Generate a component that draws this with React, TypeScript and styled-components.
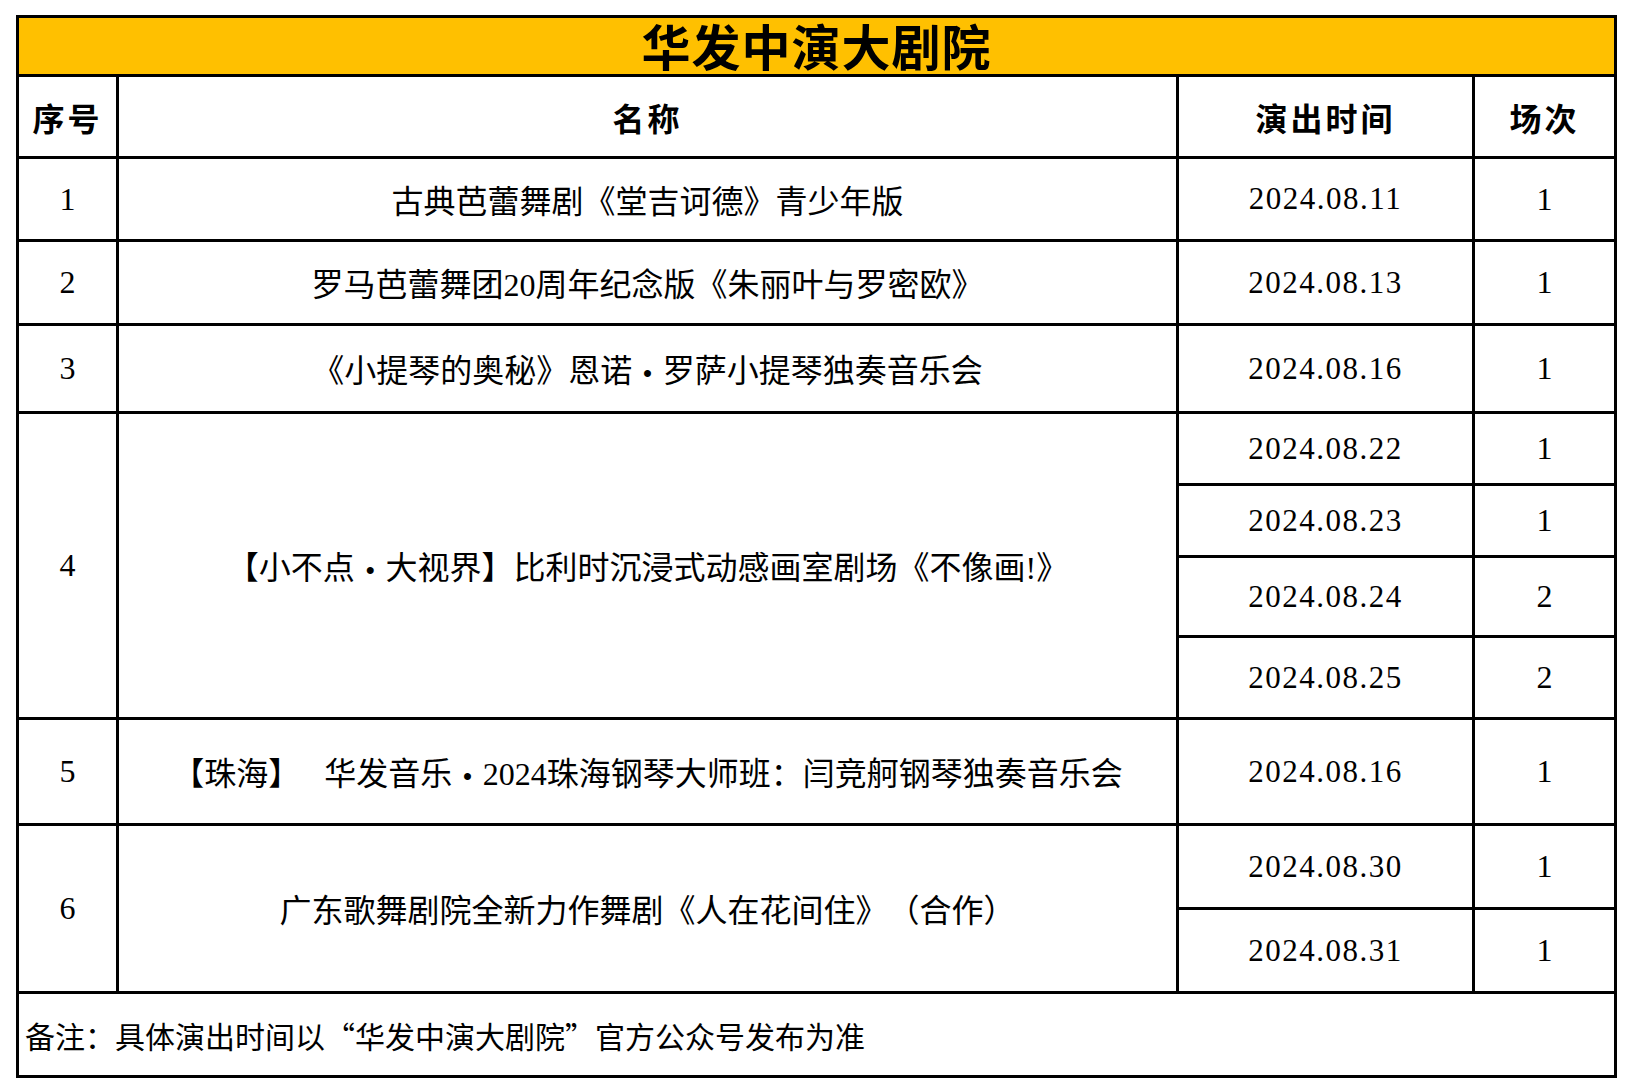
import React from 'react'
import styled, {createGlobalStyle} from "styled-components";

const GlobalStyle = createGlobalStyle`
  html, body {
    margin: 0;
    padding: 0;
    background: #ffffff;
  }
  body {
    font-family: "Liberation Serif", "Noto Sans CJK SC", serif;
    color: #000;
  }
`

const Page = styled.div`
  padding: 15px 16px;
  background: #fff;
`

const Table = styled.table`
  width: 1598px;
  table-layout: fixed;
  border-collapse: collapse;
  border: 3px solid #000;
`

const Cell = styled.td<{ $h?: number }>`
  border: 3px solid #000;
  height: ${p => p.$h ? `${p.$h - 3}px` : 'auto'};
  padding: 0;
  text-align: center;
  vertical-align: middle;
  font-size: 32px;
  line-height: 1.2;
  white-space: nowrap;
`

const TitleCell = styled(Cell)`
  background: #ffc000;
  font-size: 49px;
  font-weight: 700;
  letter-spacing: 1px;
  line-height: 1;
  padding-top: 6px;
`

const HeadCell = styled(Cell)`
  font-weight: 700;
  letter-spacing: 3px;
  padding-top: 7px;
`

const NameCell = styled(Cell)`
  padding-top: 6px;
`

const DateCell = styled(Cell)`
  font-size: 31px;
  letter-spacing: 1.5px;
`

const NoteCell = styled(Cell)`
  text-align: left;
  font-family: "Noto Sans CJK SC", sans-serif;
  font-size: 30px;
  padding-left: 6px;
`

const Dot = styled.span`
  display: inline-block;
  width: 1em;
  text-align: center;
  font-family: "Liberation Sans", sans-serif;
  font-size: 0.8em;
  margin: 0 0.1em;
`

const Paren = styled.span`
  margin-left: 0.5em;
`

type Show = {
  no: number
  name: string
  dates: { date: string, count: number, h: number }[]
}

const shows: Show[] = [
  {no: 1, name: '古典芭蕾舞剧《堂吉诃德》青少年版', dates: [{date: '2024.08.11', count: 1, h: 83}]},
  {no: 2, name: '罗马芭蕾舞团20周年纪念版《朱丽叶与罗密欧》', dates: [{date: '2024.08.13', count: 1, h: 84}]},
  {no: 3, name: '《小提琴的奥秘》恩诺·罗萨小提琴独奏音乐会', dates: [{date: '2024.08.16', count: 1, h: 88}]},
  {
    no: 4, name: '【小不点·大视界】比利时沉浸式动感画室剧场《不像画!》', dates: [
      {date: '2024.08.22', count: 1, h: 72},
      {date: '2024.08.23', count: 1, h: 72},
      {date: '2024.08.24', count: 2, h: 80},
      {date: '2024.08.25', count: 2, h: 82},
    ]
  },
  {no: 5, name: '【珠海】　 华发音乐·2024珠海钢琴大师班：闫竞舸钢琴独奏音乐会', dates: [{date: '2024.08.16', count: 1, h: 106}]},
  {
    no: 6, name: '广东歌舞剧院全新力作舞剧《人在花间住》（合作）', dates: [
      {date: '2024.08.30', count: 1, h: 84},
      {date: '2024.08.31', count: 1, h: 84},
    ]
  },
]

// SimSun-like full width middle dot and spaced brackets
const renderName = (name: string) => {
  const parts = name.split('·')
  return parts.map((part, i) => {
    const paren = part.indexOf('（')
    const text = paren > 0
      ? <>{part.slice(0, paren)}<Paren>{part.slice(paren)}</Paren></>
      : part
    return <React.Fragment key={i}>
      {i > 0 && <Dot>•</Dot>}
      {text}
    </React.Fragment>
  })
}

export default function App() {
  return <Page>
    <GlobalStyle/>
    <Table>
      <colgroup>
        <col style={{width: 100}}/>
        <col style={{width: 1060}}/>
        <col style={{width: 296}}/>
        <col style={{width: 142}}/>
      </colgroup>
      <tbody>
      <tr>
        <TitleCell colSpan={4} $h={53}>华发中演大剧院</TitleCell>
      </tr>
      <tr>
        <HeadCell $h={75}>序号</HeadCell>
        <HeadCell>名称</HeadCell>
        <HeadCell>演出时间</HeadCell>
        <HeadCell>场次</HeadCell>
      </tr>
      {shows.map(show => show.dates.map((d, i) => (
        <tr key={`${show.no}-${d.date}`}>
          {i === 0 && <Cell rowSpan={show.dates.length}>{show.no}</Cell>}
          {i === 0 && <NameCell rowSpan={show.dates.length}>{renderName(show.name)}</NameCell>}
          <DateCell $h={d.h}>{d.date}</DateCell>
          <Cell>{d.count}</Cell>
        </tr>
      )))}
      <tr>
        <NoteCell colSpan={4} $h={84}>备注：具体演出时间以“华发中演大剧院”官方公众号发布为准</NoteCell>
      </tr>
      </tbody>
    </Table>
  </Page>
}
